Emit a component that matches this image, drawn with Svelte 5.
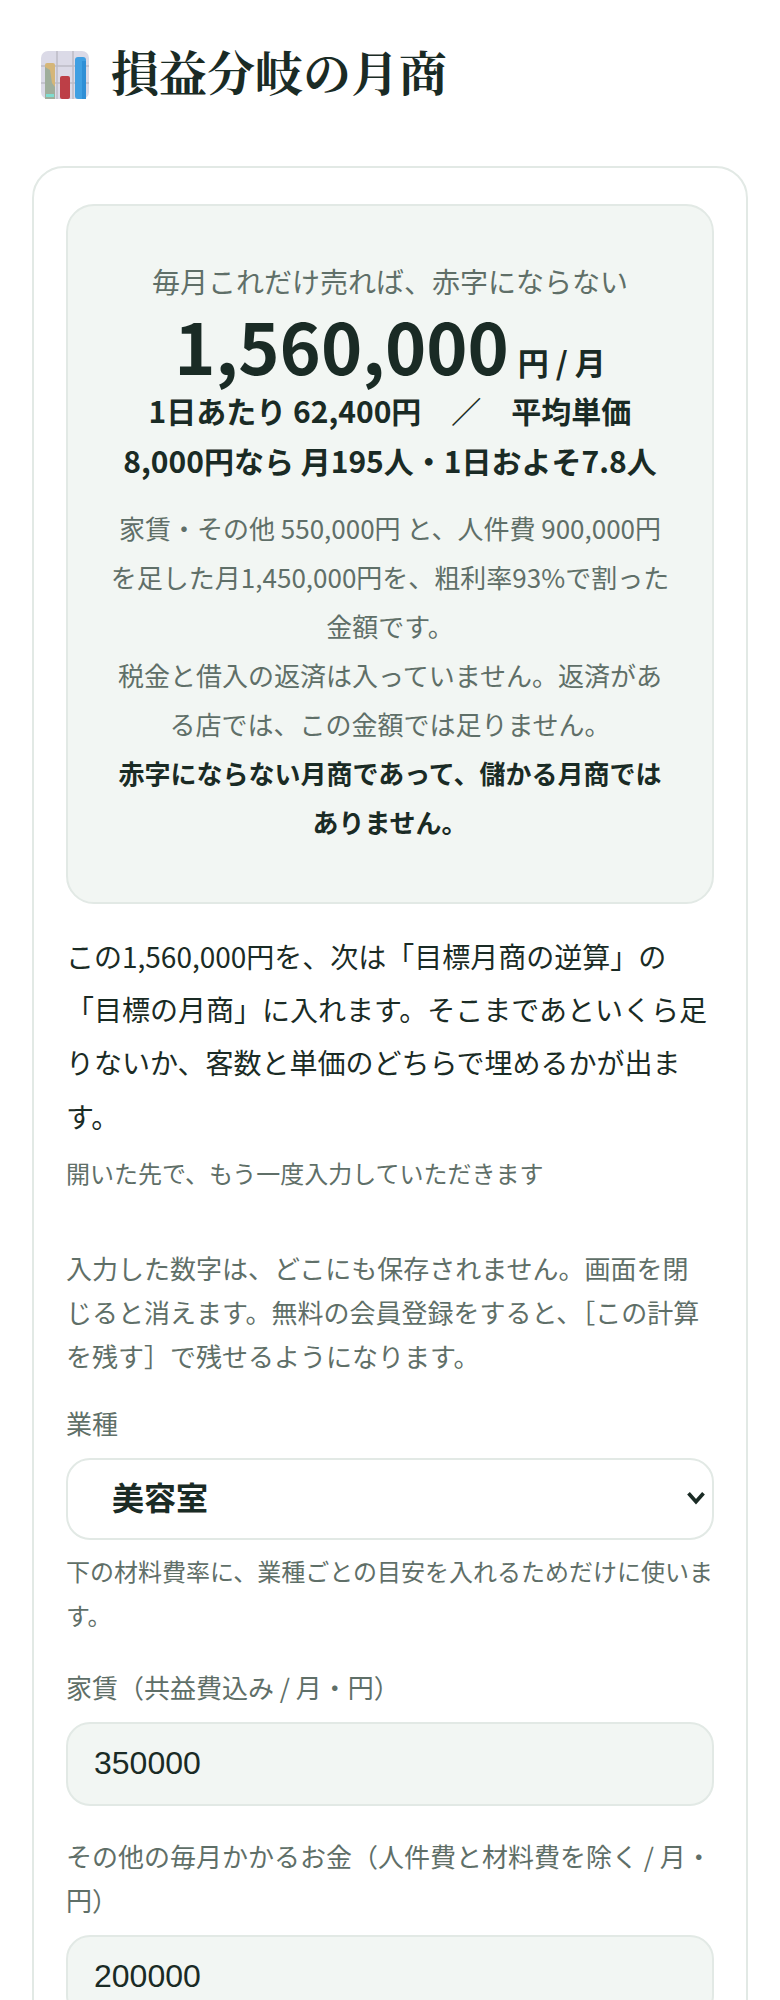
<script lang="ts">
  const fields = [
    { id: 'rent', label: '家賃（共益費込み / 月・円）', value: '350000' },
    { id: 'other', label: 'その他の毎月かかるお金（人件費と材料費を除く / 月・円）', value: '200000' },
  ];
</script>

<main class="page">
  <h1>
    <svg class="chart" viewBox="0 0 48 48" aria-hidden="true">
      <rect width="48" height="48" rx="7" fill="#dbdae7" />
      <path d="M0 15H48M0 32H48M16 0V48M32 0V48" stroke="#bdbcc6" stroke-width="1.5" />
      <rect x="4" y="12" width="10" height="36" rx="2" fill="#d5b679" />
      <path d="M4 16L9 19L11 32L14 36V48H4Z" fill="#9fae9c" />
      <rect x="5" y="43" width="8" height="3" fill="#7fdcd0" />
      <rect x="19" y="25" width="10" height="23" rx="2" fill="#bd3f47" />
      <rect x="34" y="6" width="11" height="42" rx="3" fill="#3f9fe2" />
      <rect x="41" y="10" width="4" height="38" fill="#2f8fd6" />
    </svg>
    <span>損益分岐の月商</span>
  </h1>

  <section class="card">
    <div class="result">
      <p class="lead">毎月これだけ売れば、赤字にならない</p>
      <p class="amount"><strong>1,560,000</strong> <span class="unit">円 / 月</span></p>
      <p class="sub">1日あたり 62,400円　／　平均単価 8,000円なら 月195人・1日およそ7.8人</p>
      <p class="note">家賃・その他 550,000円 と、人件費 900,000円 を足した月1,450,000円を、粗利率93%で割った金額です。<br />税金と借入の返済は入っていません。返済がある店では、この金額では足りません。<br /><b>赤字にならない月商であって、儲かる月商ではありません。</b></p>
    </div>

    <p class="next">この1,560,000円を、次は「目標月商の逆算」の「目標の月商」に入れます。そこまであといくら足りないか、客数と単価のどちらで埋めるかが出ます。</p>
    <p class="small">開いた先で、もう一度入力していただきます</p>

    <p class="privacy">入力した数字は、どこにも保存されません。画面を閉じると消えます。無料の会員登録をすると、［この計算を残す］で残せるようになります。</p>

    <div class="field">
      <label for="kind">業種</label>
      <div class="select-wrap">
        <select id="kind"><option>美容室</option></select>
        <svg class="chevron" viewBox="0 0 18 14" aria-hidden="true">
          <path d="M2 3l7 8 7-8" fill="none" stroke="currentColor" stroke-width="3.4" />
        </svg>
      </div>
      <p class="hint">下の材料費率に、業種ごとの目安を入れるためだけに使います。</p>
    </div>
    {#each fields as f}
      <div class="field">
        <label for={f.id}>{f.label}</label>
        <input id={f.id} type="text" value={f.value} />
      </div>
    {/each}
  </section>
</main>

<style>
  :global(body) { margin: 0; background: #fff; }
  .page {
    height: 2000px;
    overflow: hidden;
    box-sizing: border-box;
    padding: 32px 32px 0;
    color: #1a2b25;
    font-family: "Noto Sans CJK JP", sans-serif;
    font-size: 26px;
  }
  h1 {
    display: flex;
    align-items: center;
    gap: 22px;
    margin: 0 0 48px;
    padding-left: 9px;
    font-family: "Liberation Serif", "Noto Serif CJK JP", serif;
    font-size: 48px;
    line-height: 86px;
    font-weight: 700;
  }
  .chart { width: 48px; height: 48px; flex: none; }
  .card {
    border: 2px solid #e2e9e5;
    border-radius: 32px;
    padding: 36px 32px 0;
  }
  .result {
    background: #f2f6f3;
    border: 2px solid #e2e9e5;
    border-radius: 28px;
    padding: 51px 40px 56px;
    text-align: center;
  }
  .result p { margin: 0; }
  .lead { color: #5f6f68; font-size: 28px; line-height: 48px; }
  .result .amount { margin-top: 19px; line-height: 42px; }
  .amount strong { font-size: 70px; }
  .unit { margin-left: 3px; font-size: 31px; font-weight: 700; }
  .sub { font-size: 30px; font-weight: 700; line-height: 50px; }
  .result .note { margin-top: 18px; color: #5f6f68; font-size: 26px; line-height: 49px; }
  .note b { color: #1a2b25; }
  .next { margin: 26px 0 0; font-size: 28px; line-height: 53.2px; }
  .small { margin: 8px 0 0; color: #5f6f68; font-size: 24px; line-height: 44px; }
  .privacy { color: #5f6f68; margin: 51px 0 23px; line-height: 44px; font-size: 26px; }
  .field { margin-bottom: 28px; }
  label { display: block; color: #5f6f68; line-height: 44px; margin-bottom: 13px; }
  .select-wrap { position: relative; }
  select, input {
    display: block;
    box-sizing: border-box;
    width: 100%;
    border: 2px solid #e2e9e5;
    border-radius: 24px;
    font-size: 32px;
    color: #1a2b25;
  }
  select {
    height: 82px;
    appearance: none;
    background: #fff;
    font-family: "Liberation Sans", "Noto Sans CJK JP", sans-serif;
    font-weight: 700;
    padding: 0 44px;
  }
  .chevron { position: absolute; right: 8px; top: 32px; width: 20px; height: 15px; pointer-events: none; }
  input { height: 84px; margin-bottom: 8px; background: #f2f6f3; font-family: "Liberation Sans", sans-serif; padding: 0 26px; }
  .hint { margin: 9px 0 0; color: #5f6f68; font-size: 24px; line-height: 44px; }
</style>
